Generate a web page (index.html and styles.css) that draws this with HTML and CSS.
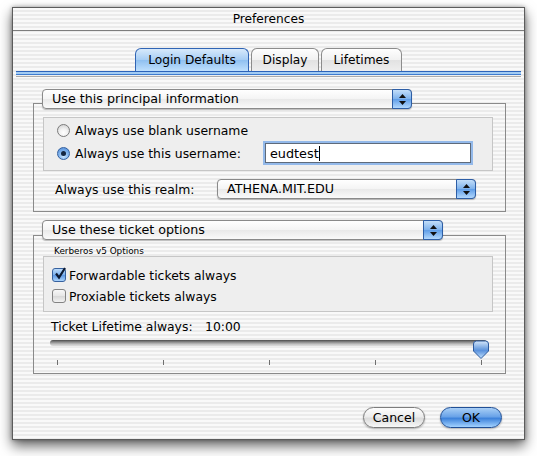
FILE: index.html
```html
<!DOCTYPE html>
<html>
<head>
<meta charset="utf-8">
<title>Preferences</title>
<link rel="stylesheet" href="styles.css">
</head>
<body>
<div class="window">
  <div class="titlebar">Preferences</div>
  <div class="tabs">
    <div class="tab selected">Login Defaults</div>
    <div class="tab">Display</div>
    <div class="tab">Lifetimes</div>
  </div>
  <div class="tabline"></div>

  <div class="group g1">
    <div class="popup p1">
      <span class="popup-label">Use this principal information</span>
      <span class="arrows"><svg width="7" height="11" viewBox="0 0 7 11"><path d="M3.5 0 L7 4 H0 Z M0 7 H7 L3.5 11 Z" fill="#111"/></svg></span>
    </div>
    <div class="well w1">
      <div class="row r1"><span class="radio"></span><span>Always use blank username</span></div>
      <div class="row r2"><span class="radio on"></span><span>Always use this username:</span>
        <div class="field">eudtest<span class="caret"></span></div>
      </div>
    </div>
    <div class="realm">
      <span class="realm-label">Always use this realm:</span>
      <div class="popup p2">
        <span class="popup-label">ATHENA.MIT.EDU</span>
        <span class="arrows"><svg width="7" height="11" viewBox="0 0 7 11"><path d="M3.5 0 L7 4 H0 Z M0 7 H7 L3.5 11 Z" fill="#111"/></svg></span>
      </div>
    </div>
  </div>

  <div class="group g2">
    <div class="popup p3">
      <span class="popup-label">Use these ticket options</span>
      <span class="arrows"><svg width="7" height="11" viewBox="0 0 7 11"><path d="M3.5 0 L7 4 H0 Z M0 7 H7 L3.5 11 Z" fill="#111"/></svg></span>
    </div>
    <div class="small">Kerberos v5 Options</div>
    <div class="well w2">
      <div class="row"><span class="check on"><svg width="14" height="14" viewBox="0 0 14 14"><path d="M3 6.5 L6 10.5 L12 1" fill="none" stroke="#0d1a33" stroke-width="2.2"/></svg></span><span>Forwardable tickets always</span></div>
      <div class="row"><span class="check"></span><span>Proxiable tickets always</span></div>
    </div>
    <div class="lifetime"><span class="life-label">Ticket Lifetime always:</span><span>10:00</span></div>
    <div class="slider">
      <div class="track"></div>
      <svg class="thumb" width="18" height="20" viewBox="0 0 18 20">
        <defs>
          <linearGradient id="tg" x1="0" y1="0" x2="0" y2="1">
            <stop offset="0" stop-color="#d5e7fb"/>
            <stop offset="0.45" stop-color="#6d9fdf"/>
            <stop offset="0.55" stop-color="#5b92dc"/>
            <stop offset="1" stop-color="#c2e2ff"/>
          </linearGradient>
        </defs>
        <path d="M1.5 4 Q1.5 1 4.5 1 H13.5 Q16.5 1 16.5 4 V11 L9 18.5 L1.5 11 Z" fill="url(#tg)" stroke="#2c5a9e" stroke-width="1"/>
      </svg>
    </div>
    <div class="ticks"><i></i><i></i><i></i><i></i><i></i></div>
  </div>

  <div class="buttons">
    <div class="btn">Cancel</div>
    <div class="btn default">OK</div>
  </div>
</div>
</body>
</html>
```

FILE: styles.css
```css
html, body {
  margin: 0;
  padding: 0;
  background: #ffffff;
}
body {
  font-family: "Lucida Grande", "DejaVu Sans", sans-serif;
  font-size: 12.4px;
  color: #000;
  width: 537px;
  height: 456px;
  overflow: hidden;
}
.window {
  margin: 7px 0 0 12px;
  width: 513px;
  height: 433px;
  box-sizing: border-box;
  border: 1px solid #5c5c5c;
  background: repeating-linear-gradient(to bottom, #f9f9f9 0, #f9f9f9 2px, #ebebeb 2px, #ebebeb 4px);
  box-shadow: 0 6px 12px rgba(0, 0, 0, 0.6), 0 0 4px rgba(0, 0, 0, 0.35);
  display: flex;
  flex-direction: column;
}
.titlebar {
  height: 22px;
  line-height: 23px;
  text-align: center;
  border-bottom: 1px solid #7d7d7d;
  font-size: 12.2px;
}
.tabs {
  display: flex;
  justify-content: center;
  gap: 2px;
  margin-top: 17px;
  height: 23px;
}
.tab {
  box-sizing: border-box;
  height: 23px;
  padding-top: 1px;
  line-height: 21px;
  text-align: center;
  border: 1px solid #8c8c8c;
  border-bottom: none;
  border-radius: 6px 6px 0 0;
  background: linear-gradient(#fefefe, #f1f1f1 50%, #e2e2e2 51%, #eeeeee);
  font-size: 12.2px;
}
.tab:nth-child(1) { width: 114px; }
.tab:nth-child(2) { width: 68px; }
.tab:nth-child(3) { width: 81px; }
.tab.selected {
  border-color: #3064b4;
  background: linear-gradient(#d7e9fb, #a6cdf4 50%, #8fc0f0 51%, #bfe0fd);
}
.tabline {
  margin: 0 3px;
  height: 2px;
  border-top: 1px solid #2c63ba;
  border-bottom: 1px solid #3f7ccf;
  background: #a3ccf3;
  box-shadow: 0 1px 0 #eeeeee, 0 2px 0 #ababab;
}
.group {
  margin-left: 20px;
  width: 473px;
  box-sizing: border-box;
  border: 1px solid #8a8a8a;
}
.g1 {
  margin-top: 28px;
  padding-bottom: 12px;
}
.g2 {
  margin-top: 23px;
  padding-bottom: 8px;
}
.popup {
  box-sizing: border-box;
  height: 20px;
  display: flex;
  align-items: center;
  border: 1px solid #8a8a8a;
  border-radius: 4px;
  background: linear-gradient(#ffffff, #f4f4f4 50%, #e9e9e9 51%, #fafafa);
  box-shadow: 0 1px 1px rgba(0, 0, 0, 0.25);
}
.popup-label {
  padding-left: 9px;
  line-height: 18px;
  font-size: 12.7px;
}
.arrows {
  box-sizing: border-box;
  margin: -1px -1px -1px auto;
  width: 20px;
  height: 20px;
  display: flex;
  align-items: center;
  justify-content: center;
  border: 1px solid #2d5ea6;
  border-radius: 0 4px 4px 0;
  background: linear-gradient(#c3def9, #7db1ec 50%, #5f9de7 51%, #b2d8fd);
}
.p1 {
  margin: -15px 0 0 8px;
  width: 370px;
}
.p3 {
  margin: -16px 0 0 8px;
  width: 401px;
}
.well {
  box-sizing: border-box;
  margin-left: 9px;
  width: 450px;
  background: #eeeeee;
  border: 1px solid #c6c6c6;
}
.w1 {
  margin-top: 8px;
  height: 54px;
  padding: 2px 0 0 13px;
}
.row {
  display: flex;
  align-items: center;
  height: 20px;
}
.w1 .r2 {
  height: 24px;
  margin-top: 1px;
}
.radio {
  box-sizing: border-box;
  width: 13px;
  height: 13px;
  margin-right: 5px;
  border-radius: 50%;
  border: 1px solid #7b7b7b;
  background: radial-gradient(circle at 50% 70%, #ffffff 0, #f2f2f2 40%, #c9c9c9 100%);
  position: relative;
}
.radio.on {
  border-color: #33609f;
  background: radial-gradient(circle at 50% 75%, #cbe6ff 0, #7eb2ec 50%, #4f88d6 100%);
}
.radio.on::after {
  content: "";
  position: absolute;
  left: 3px;
  top: 3px;
  width: 5px;
  height: 5px;
  border-radius: 50%;
  background: #142742;
}
.field {
  box-sizing: border-box;
  margin: 0 21px 0 auto;
  width: 206px;
  height: 20px;
  padding-left: 4px;
  line-height: 19px;
  background: #fff;
  border: 1px solid #5e6a7a;
  box-shadow: 0 0 0 2px #93b9ea;
  display: flex;
  align-items: center;
  font-size: 12.8px;
}
.caret {
  display: inline-block;
  width: 1px;
  height: 15px;
  background: #000;
}
.realm {
  display: flex;
  align-items: center;
  height: 20px;
  margin-top: 8px;
}
.realm-label {
  margin-left: 21px;
}
.p2 {
  margin: 0 29px 0 auto;
  width: 259px;
}
.small {
  margin: 6px 0 0 20px;
  height: 10px;
  line-height: 10px;
  font-size: 8.9px;
}
.w2 {
  height: 56px;
  padding: 8px 0 0 8px;
}
.w2 .row + .row {
  margin-top: 1px;
}
.check {
  box-sizing: border-box;
  width: 14px;
  height: 14px;
  margin-right: 3px;
  border-radius: 3px;
  border: 1px solid #838383;
  background: linear-gradient(#f7f7f7, #e6e6e6 50%, #d7d7d7 51%, #f2f2f2);
  position: relative;
}
.check.on {
  border-color: #36619f;
  background: linear-gradient(#bcdbfb, #7bb0ec 50%, #5c97e3 51%, #aad3fb);
}
.check svg {
  position: absolute;
  left: 0;
  top: -2px;
}
.lifetime {
  margin: 6px 0 0 17px;
  height: 18px;
  line-height: 18px;
  display: flex;
}
.life-label {
  width: 154px;
}
.slider {
  position: relative;
  margin: 2px 0 0 16px;
  width: 437px;
  height: 20px;
}
.track {
  margin-top: 4px;
  height: 6px;
  border-radius: 3px;
  background: linear-gradient(#4a4a4a, #8a8a8a 35%, #c2c2c2 70%, #dddddd);
}
.thumb {
  position: absolute;
  left: 422px;
  top: 0;
}
.ticks {
  display: flex;
  justify-content: space-between;
  margin-left: 23px;
  width: 425px;
  height: 5px;
}
.ticks i {
  display: block;
  width: 1px;
  height: 5px;
  background: #6f6f6f;
}
.buttons {
  display: flex;
  justify-content: flex-end;
  gap: 15px;
  margin: 33px 22px 0 0;
}
.btn {
  box-sizing: border-box;
  width: 62px;
  height: 21px;
  line-height: 19px;
  text-align: center;
  border-radius: 11px;
  border: 1px solid #7c7c7c;
  background: linear-gradient(#fdfdfd, #ededed 45%, #dcdcdc 55%, #f8f8f8);
  box-shadow: 0 1px 2px rgba(0, 0, 0, 0.3);
  font-size: 12.5px;
}
.btn.default {
  border-color: #204f96;
  background: linear-gradient(#a9cff6, #6aa3e8 45%, #3f83db 55%, #a2d2ff);
}
```
